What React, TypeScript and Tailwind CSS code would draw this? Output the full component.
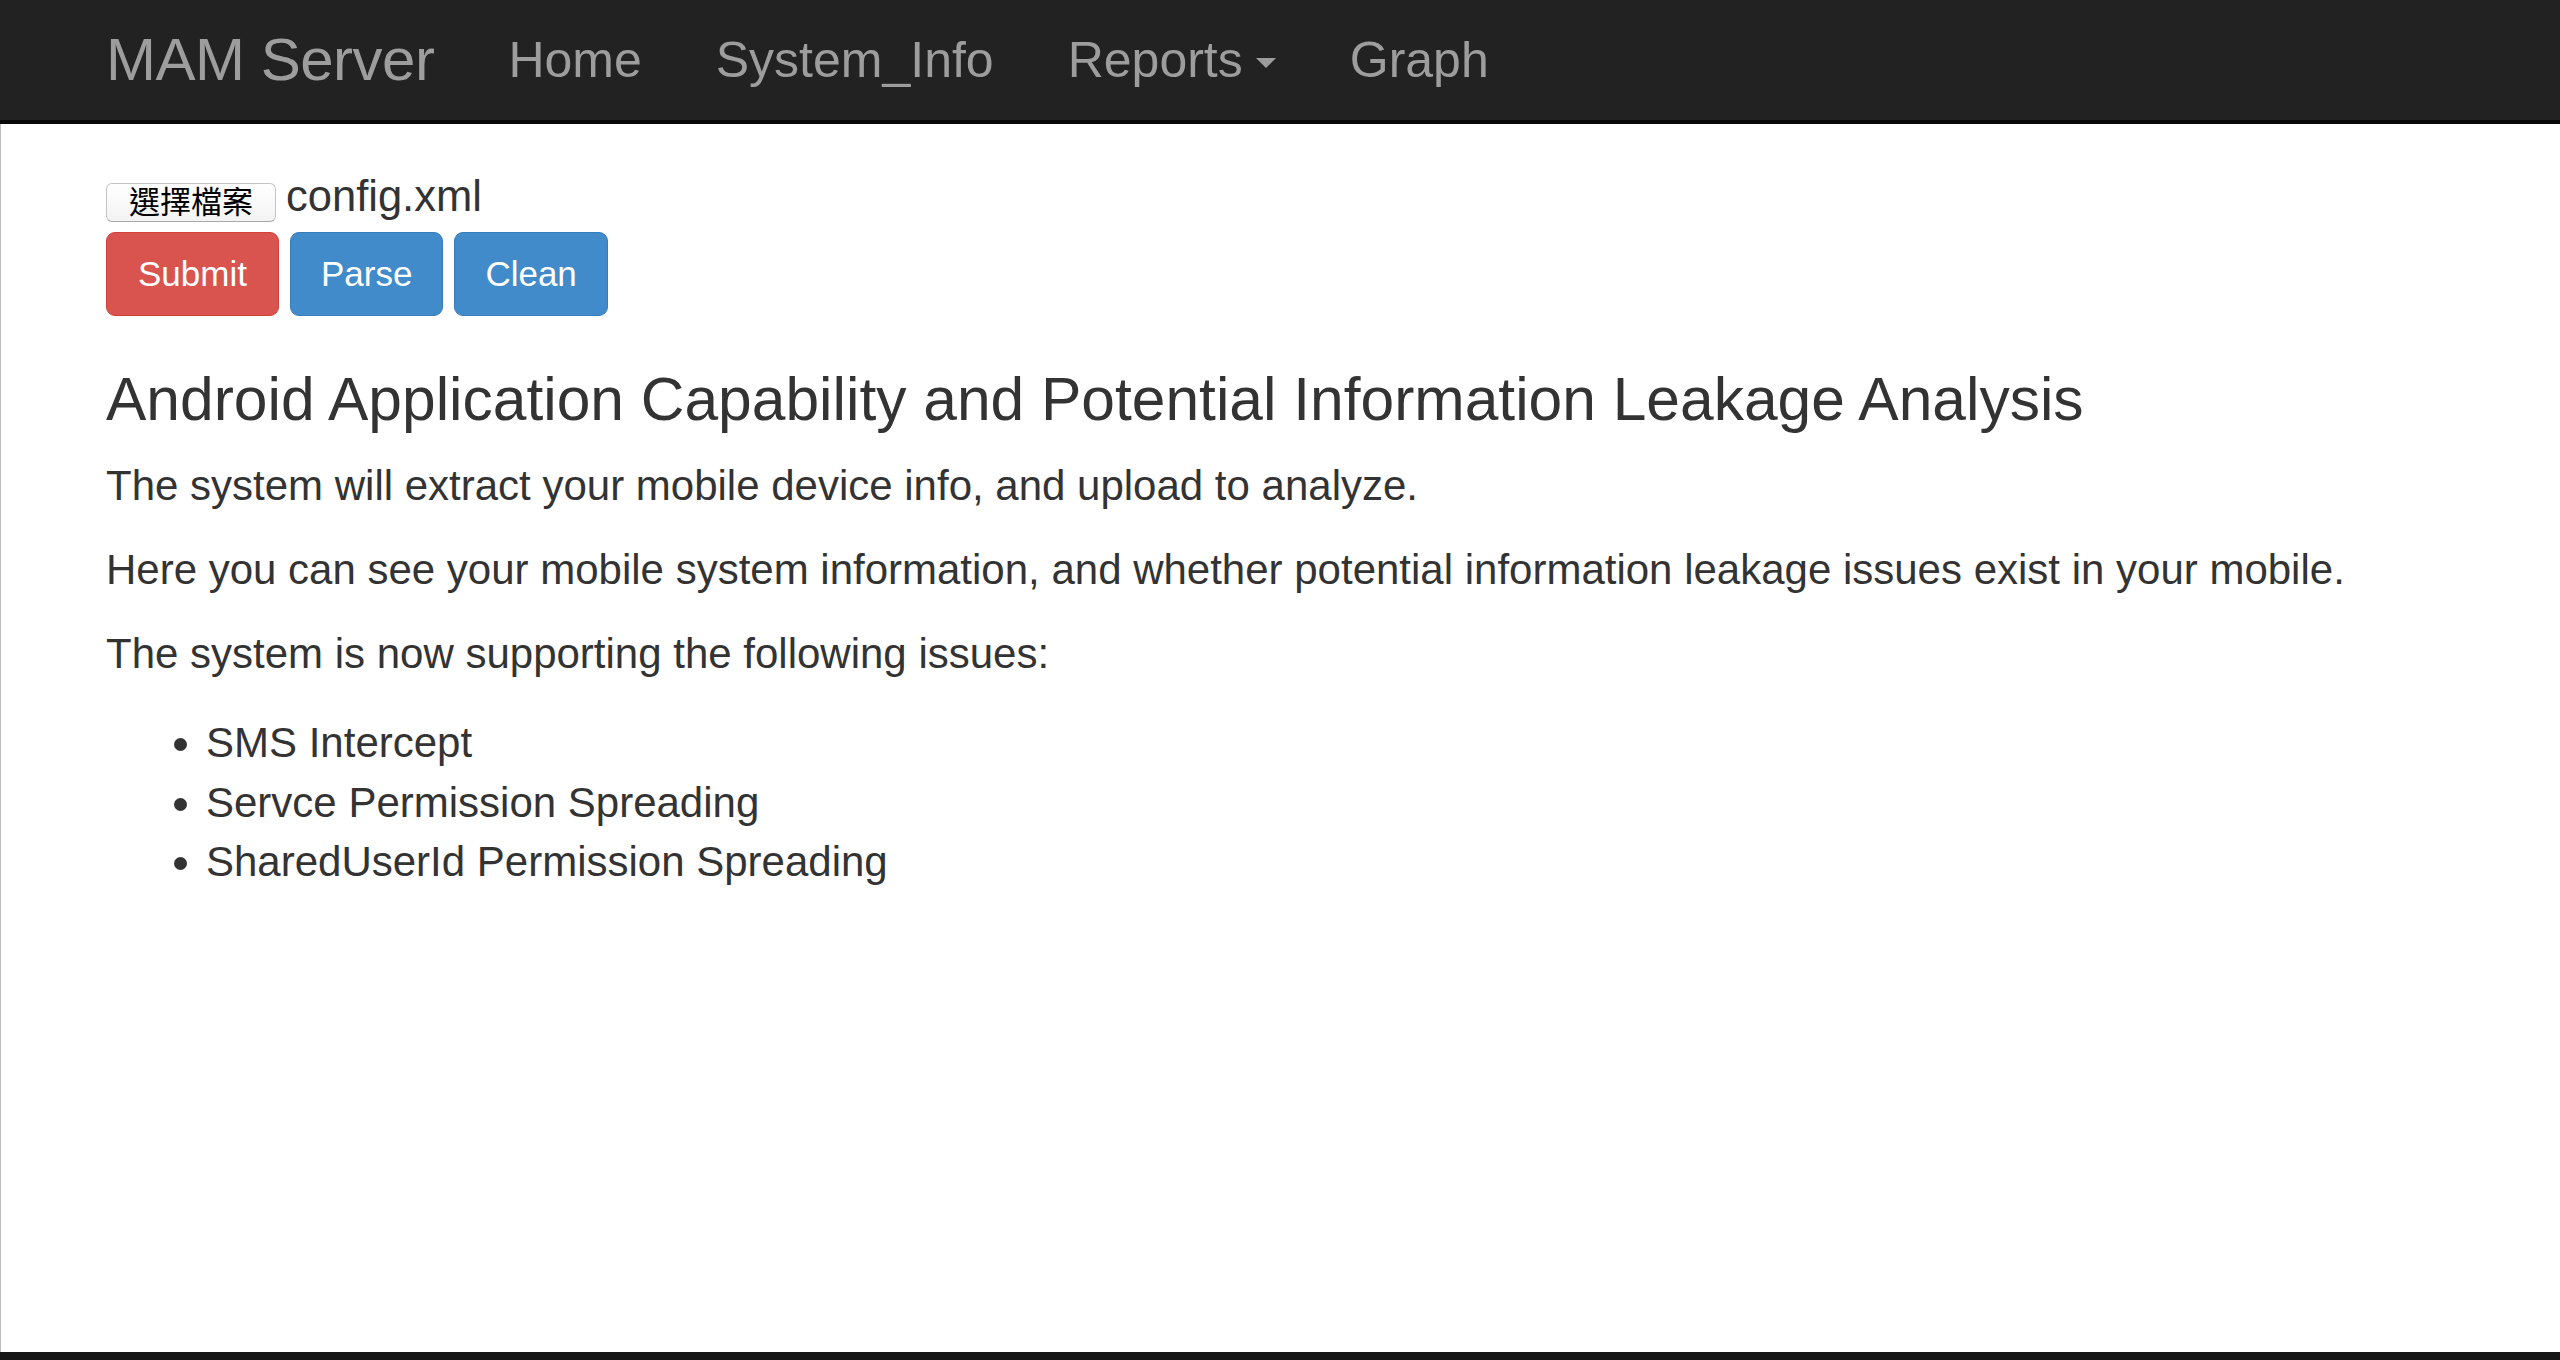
import React from "react";

const FONT = { fontFamily: '"Liberation Sans", Arial, "Noto Sans CJK TC", sans-serif' };

const NAV_LINKS = ["Home", "System_Info", "Reports", "Graph"];

const ISSUES = [
  "SMS Intercept",
  "Servce Permission Spreading",
  "SharedUserId Permission Spreading",
];

function Navbar() {
  return (
    <nav className="h-[124px] shrink-0 bg-[#222] border-b-[4px] border-[#080808] flex items-center pl-[106px]">
      <a className="text-[60px] leading-none text-[#9d9d9d] tracking-[-0.5px]">MAM Server</a>
      <ul className="flex items-center ml-[37px]">
        {NAV_LINKS.map((label) => (
          <li key={label} className="px-[37px] flex items-center text-[50px] leading-none text-[#9d9d9d]">
            {label}
            {label === "Reports" && (
              <span className="ml-[13px] mt-[6px] w-0 h-0 border-t-[10px] border-t-[#9d9d9d] border-x-[10px] border-x-transparent" />
            )}
          </li>
        ))}
      </ul>
    </nav>
  );
}

function Toolbar() {
  return (
    <div>
      <div className="flex items-start">
        <button className="mt-[10px] h-[39px] px-[22px] flex items-center rounded-[6px] border border-[#c4c4c4] border-b-[#a9a9a9] bg-gradient-to-b from-white to-[#f3f3f3] text-[31px] leading-none text-black">
          選擇檔案
        </button>
        <span className="ml-[10px] mt-[2px] text-[43.5px] leading-[42px] text-[#333]">config.xml</span>
      </div>
      <div className="flex gap-[11px] mt-[10px]">
        <button className="h-[84px] px-[31px] flex items-center rounded-[9px] border border-[#d43f3a] bg-[#d9534f] text-white text-[35px]">
          Submit
        </button>
        <button className="h-[84px] px-[30px] flex items-center rounded-[9px] border border-[#357ebd] bg-[#428bca] text-white text-[35px]">
          Parse
        </button>
        <button className="h-[84px] px-[30px] flex items-center rounded-[9px] border border-[#357ebd] bg-[#428bca] text-white text-[35px]">
          Clean
        </button>
      </div>
    </div>
  );
}

export default function App() {
  return (
    <div className="h-[1360px] flex flex-col bg-[#161616] overflow-hidden" style={FONT}>
      <Navbar />
      <main className="flex-1 bg-white border-l border-[#bdbdbd] pl-[105px] pt-[49px] text-[#333]">
        <Toolbar />
        <h3 className="mt-[50px] mb-[24px] text-[60.5px] leading-[66px] font-normal">
          Android Application Capability and Potential Information Leakage Analysis
        </h3>
        <p className="text-[42px] leading-[60px] mb-[24px]">
          The system will extract your mobile device info, and upload to analyze.
        </p>
        <p className="text-[42px] leading-[60px] mb-[24px]">
          Here you can see your mobile system information, and whether potential information leakage issues exist in your mobile.
        </p>
        <p className="text-[42px] leading-[60px] mb-[29px]">The system is now supporting the following issues:</p>
        <ul className="list-disc pl-[100px] text-[42px] leading-[59.5px]">
          {ISSUES.map((item) => (
            <li key={item}>{item}</li>
          ))}
        </ul>
      </main>
      <div className="h-[8px] shrink-0 bg-[#161616]" />
    </div>
  );
}
